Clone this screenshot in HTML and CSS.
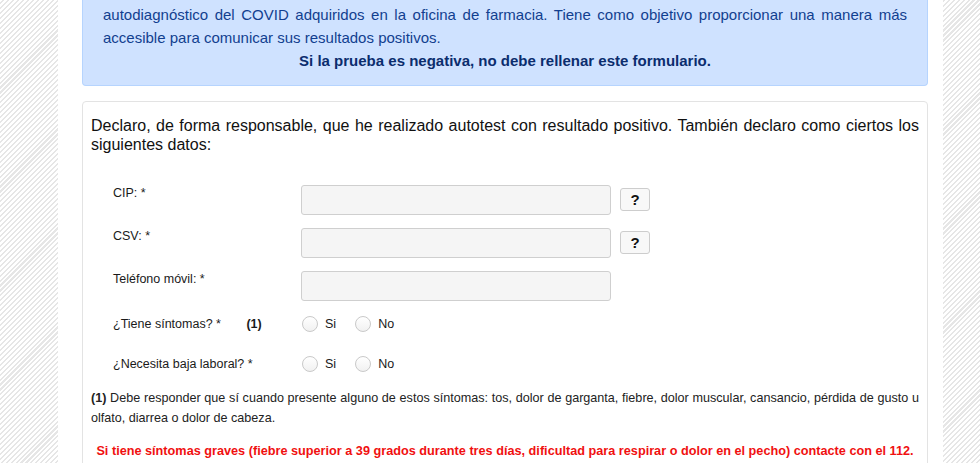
FILE: index.html
```html
<!DOCTYPE html>
<html lang="es">
<head>
	<meta charset="utf-8">
	<title>Autotest COVID - Declaración</title>
	<link rel="stylesheet" href="styles.css">
</head>
<body>
	<div class="page">
		<div class="info">
			<p class="info-text">autodiagnóstico del COVID adquiridos en la oficina de farmacia. Tiene como objetivo proporcionar una manera más accesible para comunicar sus resultados positivos.</p>
			<p class="info-strong">Si la prueba es negativa, no debe rellenar este formulario.</p>
		</div>

		<div class="card">
			<p class="intro">Declaro, de forma responsable, que he realizado autotest con resultado positivo. También declaro como ciertos los siguientes datos:</p>

			<div class="fields">
				<div class="field">
					<label class="field-label" for="cip">CIP: *</label>
					<input class="text-input" id="cip" type="text">
					<button class="help" type="button">?</button>
				</div>
				<div class="field">
					<label class="field-label" for="csv">CSV: *</label>
					<input class="text-input" id="csv" type="text">
					<button class="help" type="button">?</button>
				</div>
				<div class="field">
					<label class="field-label" for="tel">Teléfono móvil: *</label>
					<input class="text-input" id="tel" type="text">
				</div>

				<div class="field radio-field">
					<span class="field-label">¿Tiene síntomas? * <b class="ref">(1)</b></span>
					<label class="radio"><input type="radio" name="sintomas"> Si</label>
					<label class="radio"><input type="radio" name="sintomas"> No</label>
				</div>
				<div class="field radio-field second">
					<span class="field-label">¿Necesita baja laboral? *</span>
					<label class="radio"><input type="radio" name="baja"> Si</label>
					<label class="radio"><input type="radio" name="baja"> No</label>
				</div>
			</div>

			<p class="note"><b>(1)</b> Debe responder que sí cuando presente alguno de estos síntomas: tos, dolor de garganta, fiebre, dolor muscular, cansancio, pérdida de gusto u olfato, diarrea o dolor de cabeza.</p>
			<p class="warning">Si tiene síntomas graves (fiebre superior a 39 grados durante tres días, dificultad para respirar o dolor en el pecho) contacte con el 112.</p>
		</div>
	</div>
</body>
</html>
```

FILE: styles.css
```css
body{
	margin: 0;
	padding: 0;
	font-family: "Liberation Sans", Arial, sans-serif;
	color: #222;
	background: repeating-linear-gradient(135deg, #fff 0 2px, #e6e6e6 2px 3.5px);
	min-height: 100vh;
}
.page{
	margin-left: 58px;
	width: 846px;
	padding: 0 15px 0 24px;
	min-height: 100vh;
	background: #fff;
}

/* aviso superior */
.info{
	background: #cfe2ff;
	border: 1px solid #b6d4fe;
	border-top: none;
	border-radius: 0 0 4px 4px;
	padding: 3px 20px 13px;
	color: #123f8f;
	font-size: 15px;
	line-height: 23px;
}
.info p{
	margin: 0;
}
.info-text{
	text-align: justify;
}
.info-strong{
	text-align: center;
	font-weight: bold;
	color: #0b2d6e;
}

/* formulario */
.card{
	margin-top: 15px;
	border: 1px solid #e3e3e3;
	border-radius: 4px;
	padding: 14px 8px 20px;
	height: 400px;
}
.intro{
	margin: 0;
	font-size: 16px;
	line-height: 19px;
	text-align: justify;
	color: #111;
}
.fields{
	margin-top: 31px;
	padding-left: 22px;
}
.field{
	display: flex;
	align-items: flex-start;
	margin-bottom: 13px;
	font-size: 12.5px;
	color: #1a1a1a;
}
.field-label{
	width: 188px;
	flex-shrink: 0;
	line-height: 15px;
	padding-top: 1px;
}
.ref{
	margin-left: 22px;
}
.text-input{
	box-sizing: border-box;
	width: 310px;
	height: 30px;
	margin: 0;
	border: 1px solid #cfcfcf;
	border-radius: 3px;
	background: #f5f5f5;
	outline: none;
}
.help{
	box-sizing: border-box;
	width: 30px;
	height: 23px;
	margin: 3px 0 0 9px;
	padding: 0;
	border: 1px solid #cdcdcd;
	border-radius: 3px;
	background: #f8f8f8;
	font-family: "Liberation Sans", Arial, sans-serif;
	font-size: 15px;
	font-weight: bold;
	color: #111;
	cursor: pointer;
}
.radio-field{
	align-items: center;
	margin-top: 11px;
	height: 20px;
}
.radio-field.second{
	margin-top: 20px;
}
.radio-field .field-label{
	padding-top: 0;
}
.radio{
	display: flex;
	align-items: center;
	gap: 7px;
	margin-right: 18px;
	margin-left: 1px;
}
.radio input{
	appearance: none;
	-webkit-appearance: none;
	width: 16px;
	height: 16px;
	margin: 0;
	border: 1px solid #c9c9c9;
	border-radius: 50%;
	background: linear-gradient(#fff, #f1f1f1);
}

.note{
	margin: 14px 0 0;
	font-size: 12.6px;
	line-height: 20px;
	text-align: justify;
}
.warning{
	margin: 13px 0 0;
	font-size: 12.7px;
	line-height: 20px;
	font-weight: bold;
	text-align: center;
	color: #f01010;
}
```
